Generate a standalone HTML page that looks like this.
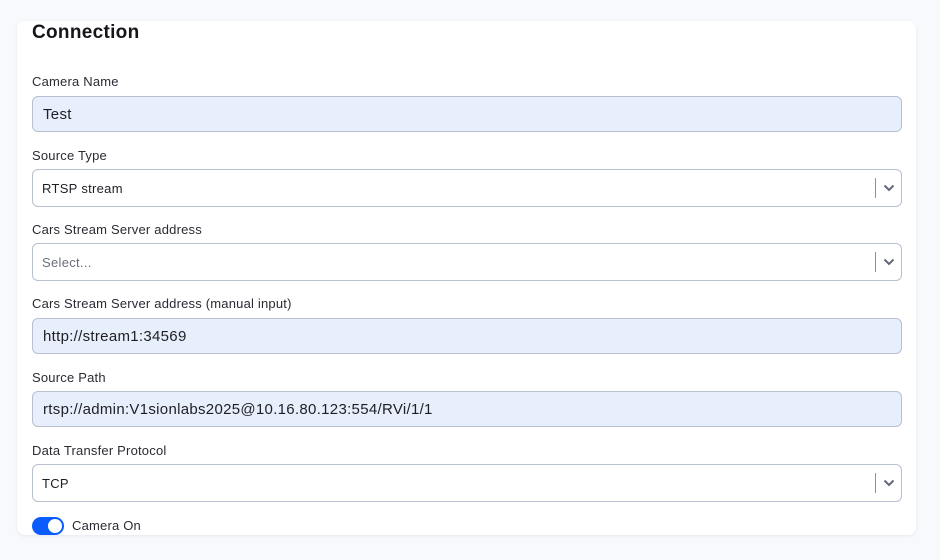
<!DOCTYPE html>
<html><head><style>
*{box-sizing:border-box;margin:0;padding:0}
body{width:940px;height:560px;background:#f7f9fd;font-family:"Liberation Sans",sans-serif;position:relative;overflow:hidden;color:#1e1f24}
.card{position:absolute;left:17px;top:21px;width:899px;height:514px;background:#fff;border-radius:8px;box-shadow:0 1px 3px rgba(30,40,80,.08)}
h2{position:absolute;left:32px;top:22px;font-size:19px;font-weight:bold;color:#15161a;letter-spacing:.3px}
.lbl{position:absolute;left:32px;font-size:13px;color:#2a2b33;letter-spacing:.2px}
.in{position:absolute;left:32px;width:870px;border:1px solid #b8bfcf;border-radius:6px;font-size:15px;padding-left:10px;display:flex;align-items:center;letter-spacing:.3px}
.f{background:#e8effc;height:36px}
.s{background:#fff;height:38px;font-size:13px;padding-left:9px}
.ar{position:absolute;right:0;top:0;width:26px;border-left:1px solid #8a90a0;margin:8px 0;height:20px}
.ar svg{position:absolute;left:7px;top:6px}
</style></head><body>
<div class="card"></div>
<h2>Connection</h2>
<div class="lbl" style="top:74px">Camera Name</div>
<div class="in f" style="top:96px">Test</div>
<div class="lbl" style="top:148px">Source Type</div>
<div class="in s" style="top:169px">RTSP stream<div class="ar"><svg width="12" height="8" viewBox="0 0 12 8"><path d="M1.5 1.5L6 6L10.5 1.5" fill="none" stroke="#626878" stroke-width="2"/></svg></div></div>
<div class="lbl" style="top:222px">Cars Stream Server address</div>
<div class="in s" style="top:243px;color:#6b6f7a">Select...<div class="ar"><svg width="12" height="8" viewBox="0 0 12 8"><path d="M1.5 1.5L6 6L10.5 1.5" fill="none" stroke="#626878" stroke-width="2"/></svg></div></div>
<div class="lbl" style="top:296px">Cars Stream Server address (manual input)</div>
<div class="in f" style="top:318px">http://stream1:34569</div>
<div class="lbl" style="top:370px">Source Path</div>
<div class="in f" style="top:391px">rtsp://admin:V1sionlabs2025@10.16.80.123:554/RVi/1/1</div>
<div class="lbl" style="top:443px">Data Transfer Protocol</div>
<div class="in s" style="top:464px">TCP<div class="ar"><svg width="12" height="8" viewBox="0 0 12 8"><path d="M1.5 1.5L6 6L10.5 1.5" fill="none" stroke="#626878" stroke-width="2"/></svg></div></div>
<div style="position:absolute;left:32px;top:517px;width:32px;height:18px;border-radius:9px;background:#0a5cff"><div style="position:absolute;right:2px;top:2px;width:14px;height:14px;border-radius:50%;background:#fff"></div></div>
<div class="lbl" style="left:72px;top:518px">Camera On</div>
</body></html>
